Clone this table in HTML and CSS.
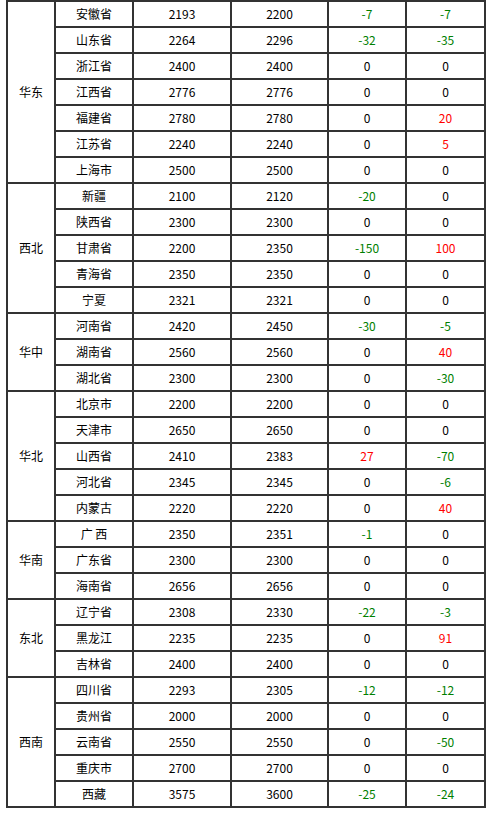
FILE: index.html
```html
<!DOCTYPE html>
<html lang="zh">
<head>
<meta charset="utf-8">
<link rel="stylesheet" href="styles.css">
</head>
<body>
<table class="price">
<colgroup>
<col class="c1"><col class="c2"><col class="c3"><col class="c4"><col class="c5"><col class="c6">
</colgroup>
<tbody>
<tr><td rowspan="7">华东</td><td>安徽省</td><td>2193</td><td>2200</td><td class="g">-7</td><td class="g">-7</td></tr>
<tr><td>山东省</td><td>2264</td><td>2296</td><td class="g">-32</td><td class="g">-35</td></tr>
<tr><td>浙江省</td><td>2400</td><td>2400</td><td>0</td><td>0</td></tr>
<tr><td>江西省</td><td>2776</td><td>2776</td><td>0</td><td>0</td></tr>
<tr><td>福建省</td><td>2780</td><td>2780</td><td>0</td><td class="r">20</td></tr>
<tr><td>江苏省</td><td>2240</td><td>2240</td><td>0</td><td class="r">5</td></tr>
<tr><td>上海市</td><td>2500</td><td>2500</td><td>0</td><td>0</td></tr>

<tr><td rowspan="5">西北</td><td>新疆</td><td>2100</td><td>2120</td><td class="g">-20</td><td>0</td></tr>
<tr><td>陕西省</td><td>2300</td><td>2300</td><td>0</td><td>0</td></tr>
<tr><td>甘肃省</td><td>2200</td><td>2350</td><td class="g">-150</td><td class="r">100</td></tr>
<tr><td>青海省</td><td>2350</td><td>2350</td><td>0</td><td>0</td></tr>
<tr><td>宁夏</td><td>2321</td><td>2321</td><td>0</td><td>0</td></tr>

<tr><td rowspan="3">华中</td><td>河南省</td><td>2420</td><td>2450</td><td class="g">-30</td><td class="g">-5</td></tr>
<tr><td>湖南省</td><td>2560</td><td>2560</td><td>0</td><td class="r">40</td></tr>
<tr><td>湖北省</td><td>2300</td><td>2300</td><td>0</td><td class="g">-30</td></tr>

<tr><td rowspan="5">华北</td><td>北京市</td><td>2200</td><td>2200</td><td>0</td><td>0</td></tr>
<tr><td>天津市</td><td>2650</td><td>2650</td><td>0</td><td>0</td></tr>
<tr><td>山西省</td><td>2410</td><td>2383</td><td class="r">27</td><td class="g">-70</td></tr>
<tr><td>河北省</td><td>2345</td><td>2345</td><td>0</td><td class="g">-6</td></tr>
<tr><td>内蒙古</td><td>2220</td><td>2220</td><td>0</td><td class="r">40</td></tr>

<tr><td rowspan="3">华南</td><td>广 西</td><td>2350</td><td>2351</td><td class="g">-1</td><td>0</td></tr>
<tr><td>广东省</td><td>2300</td><td>2300</td><td>0</td><td>0</td></tr>
<tr><td>海南省</td><td>2656</td><td>2656</td><td>0</td><td>0</td></tr>

<tr><td rowspan="3">东北</td><td>辽宁省</td><td>2308</td><td>2330</td><td class="g">-22</td><td class="g">-3</td></tr>
<tr><td>黑龙江</td><td>2235</td><td>2235</td><td>0</td><td class="r">91</td></tr>
<tr><td>吉林省</td><td>2400</td><td>2400</td><td>0</td><td>0</td></tr>

<tr><td rowspan="5">西南</td><td>四川省</td><td>2293</td><td>2305</td><td class="g">-12</td><td class="g">-12</td></tr>
<tr><td>贵州省</td><td>2000</td><td>2000</td><td>0</td><td>0</td></tr>
<tr><td>云南省</td><td>2550</td><td>2550</td><td>0</td><td class="g">-50</td></tr>
<tr><td>重庆市</td><td>2700</td><td>2700</td><td>0</td><td>0</td></tr>
<tr><td>西藏</td><td>3575</td><td>3600</td><td class="g">-25</td><td class="g">-24</td></tr>
</tbody>
</table>
</body>
</html>
```
FILE: styles.css
```css
html, body {
  margin: 0;
  padding: 0;
  background: #ffffff;
}
body {
  padding: 0 0 0 6px;
  font-family: "Noto Sans CJK SC", "Noto Sans", sans-serif;
  font-size: 12px;
  color: #000000;
}
.price {
  border-collapse: collapse;
  table-layout: fixed;
  width: 480px;
}
.c1 { width: 48px; }
.c2 { width: 78px; }
.c3 { width: 98px; }
.c4 { width: 97px; }
.c5 { width: 78px; }
.c6 { width: 79px; }
.price td {
  border: 2px solid #333333;
  padding: 0;
  height: 24px;
  text-align: center;
  vertical-align: middle;
  line-height: 16px;
  white-space: pre;
}
.price .g { color: #008000; }
.price .r { color: #ff0000; }
```
